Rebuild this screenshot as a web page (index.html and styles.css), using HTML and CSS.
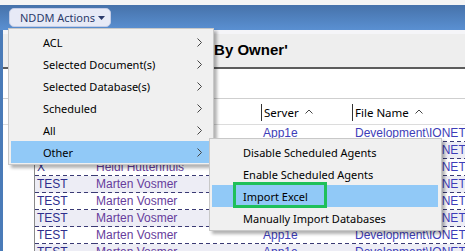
FILE: index.html
```html
<!DOCTYPE html>
<html lang="en">
<head>
    <meta charset="UTF-8">
    <title>NDDM - Databases</title>
    <link rel="stylesheet" href="styles.css">
</head>
<body>
    <div class="banner">
        <div class="actions">
            <button class="actions-button">NDDM Actions
                <svg class="caret" width="7" height="4" viewBox="0 0 7 4"><polygon points="0,0 7,0 3.5,4" fill="#2b3a6b"/></svg>
            </button>
            <div class="menu">
                <div class="menu-item">ACL<svg class="chevron" width="5" height="9" viewBox="0 0 5 9"><polyline points="0.5,0.5 4.5,4.5 0.5,8.5" fill="none" stroke="#444" stroke-width="1"/></svg></div>
                <div class="menu-item">Selected Document(s)<svg class="chevron" width="5" height="9" viewBox="0 0 5 9"><polyline points="0.5,0.5 4.5,4.5 0.5,8.5" fill="none" stroke="#444" stroke-width="1"/></svg></div>
                <div class="menu-item">Selected Database(s)<svg class="chevron" width="5" height="9" viewBox="0 0 5 9"><polyline points="0.5,0.5 4.5,4.5 0.5,8.5" fill="none" stroke="#444" stroke-width="1"/></svg></div>
                <div class="menu-item">Scheduled<svg class="chevron" width="5" height="9" viewBox="0 0 5 9"><polyline points="0.5,0.5 4.5,4.5 0.5,8.5" fill="none" stroke="#444" stroke-width="1"/></svg></div>
                <div class="menu-item">All<svg class="chevron" width="5" height="9" viewBox="0 0 5 9"><polyline points="0.5,0.5 4.5,4.5 0.5,8.5" fill="none" stroke="#444" stroke-width="1"/></svg></div>
                <div class="menu-item active">Other<svg class="chevron" width="5" height="9" viewBox="0 0 5 9"><polyline points="0.5,0.5 4.5,4.5 0.5,8.5" fill="none" stroke="#444" stroke-width="1"/></svg>
                    <div class="submenu">
                        <div class="menu-item">Disable Scheduled Agents</div>
                        <div class="menu-item">Enable Scheduled Agents</div>
                        <div class="menu-item active">Import Excel<span class="callout"></span></div>
                        <div class="menu-item">Manually Import Databases</div>
                    </div>
                </div>
            </div>
        </div>
    </div>
    <div class="workspace">
        <div class="stripe"></div>
        <div class="pane">
            <div class="view-title">All Databases 'By Owner'</div>
            <div class="toolbar"></div>
            <div class="grid">
                <div class="grid-head">
                    <div class="gutter"></div>
                    <div class="head-cell">Owner</div>
                    <div class="head-cell">Name</div>
                    <div class="head-cell sep">Server<svg class="sort" width="8" height="5" viewBox="0 0 8 5"><polyline points="0.5,4.5 4,1 7.5,4.5" fill="none" stroke="#444" stroke-width="1"/></svg></div>
                    <div class="head-cell sep">File Name<svg class="sort" width="8" height="5" viewBox="0 0 8 5"><polyline points="0.5,4.5 4,1 7.5,4.5" fill="none" stroke="#444" stroke-width="1"/></svg></div>
                </div>
                <div class="row">
                    <div class="gutter"></div>
                    <div class="cell c-type">X</div>
                    <div class="cell c-owner">Heidi Huttenhuis</div>
                    <div class="cell c-server">App1e</div>
                    <div class="cell c-file">Development\IONET\hr.nsf</div>
                </div>
                <div class="row shaded">
                    <div class="gutter"></div>
                    <div class="cell c-type">X</div>
                    <div class="cell c-owner">Heidi Huttenhuis</div>
                    <div class="cell c-server">App1e</div>
                    <div class="cell c-file">Development\IONET\sales.nsf</div>
                </div>
                <div class="row">
                    <div class="gutter"></div>
                    <div class="cell c-type">X</div>
                    <div class="cell c-owner">Heidi Huttenhuis</div>
                    <div class="cell c-server">App1e</div>
                    <div class="cell c-file">Development\IONET\tasks.nsf</div>
                </div>
                <div class="row shaded">
                    <div class="gutter"></div>
                    <div class="cell c-type">TEST</div>
                    <div class="cell c-owner">Marten Vosmer</div>
                    <div class="cell c-server">App1e</div>
                    <div class="cell c-file">Development\IONET\test1.nsf</div>
                </div>
                <div class="row">
                    <div class="gutter"></div>
                    <div class="cell c-type">TEST</div>
                    <div class="cell c-owner">Marten Vosmer</div>
                    <div class="cell c-server">App1e</div>
                    <div class="cell c-file">Development\IONET\test2.nsf</div>
                </div>
                <div class="row shaded">
                    <div class="gutter"></div>
                    <div class="cell c-type">TEST</div>
                    <div class="cell c-owner">Marten Vosmer</div>
                    <div class="cell c-server">App1e</div>
                    <div class="cell c-file">Development\IONET\test3.nsf</div>
                </div>
                <div class="row">
                    <div class="gutter"></div>
                    <div class="cell c-type">TEST</div>
                    <div class="cell c-owner">Marten Vosmer</div>
                    <div class="cell c-server">App1e</div>
                    <div class="cell c-file">Development\IONET\test4.nsf</div>
                </div>
                <div class="row shaded">
                    <div class="gutter"></div>
                    <div class="cell c-type">TEST</div>
                    <div class="cell c-owner">Marten Vosmer</div>
                    <div class="cell c-server">App1e</div>
                    <div class="cell c-file">Development\IONET\test5.nsf</div>
                </div>
            </div>
        </div>
    </div>
</body>
</html>
```

FILE: styles.css
```css
body {
    margin: 0;
    padding: 5px 0 0 0;
    background-color: #f4f4f4;
    font-family: 'Noto Sans', sans-serif;
    font-size: 11px;
    overflow: hidden;
}
.banner {
    height: 25px;
    background: linear-gradient(#4672aa, #5a90d2);
    padding: 3px 0 0 9px;
    box-sizing: border-box;
}
.actions {
    position: relative;
    width: 102px;
}
.actions-button {
    display: flex;
    align-items: center;
    gap: 3px;
    height: 19px;
    width: 102px;
    padding: 0 0 1px 10px;
    background-color: #e7eaf6;
    border: 1px solid #c3cce6;
    border-radius: 5px;
    color: #2b3a6b;
    font-family: 'Noto Sans', sans-serif;
    font-size: 11px;
    box-sizing: border-box;
}
.caret {
    margin-top: 1px;
}
.menu {
    position: absolute;
    top: 20px;
    left: -1px;
    width: 206px;
    padding: 2px 2px 1px 2px;
    background-color: #f0f0f0;
    border: 1px solid #c8c8c8;
    box-shadow: 3px 3px 3px rgba(0, 0, 0, 0.3);
    box-sizing: border-box;
    z-index: 2;
}
.menu-item {
    position: relative;
    display: flex;
    align-items: center;
    justify-content: space-between;
    height: 22px;
    padding: 0 9px 0 32px;
    color: #000;
}
.menu-item.active {
    background-color: #91c9f7;
}
.chevron {
    margin-top: 1px;
}
.submenu {
    position: absolute;
    top: -3px;
    left: 198px;
    width: 233px;
    padding: 2px 3px 1px 2px;
    background-color: #f0f0f0;
    border: 1px solid #c8c8c8;
    box-shadow: 3px 3px 3px rgba(0, 0, 0, 0.3);
    box-sizing: border-box;
}
.submenu .menu-item {
    padding-left: 31px;
}
.callout {
    position: absolute;
    left: 21px;
    top: -3px;
    width: 94px;
    height: 26px;
    border: 3px solid #1fc05a;
    box-sizing: border-box;
}
.workspace {
    display: flex;
    height: 230px;
}
.stripe {
    width: 3px;
    background-color: #4a7bb8;
}
.pane {
    flex: 1;
    background-color: #fff;
    min-width: 0;
}
.view-title {
    height: 39px;
    border-top: 4px solid #f5f5f8;
    border-bottom: 2px solid #5c5c5c;
    background-color: #eeeeee;
    padding-left: 105px;
    line-height: 31px;
    font-family: 'Liberation Sans', Arial, sans-serif;
    font-weight: bold;
    font-size: 15px;
    box-sizing: border-box;
}
.toolbar {
    height: 30px;
    border-bottom: 1px solid #cfcfcf;
    box-sizing: border-box;
}
.grid-head, .row {
    display: grid;
    grid-template-columns: 31px 60px 167px 91px 1fr;
}
.grid-head {
    height: 26px;
    border-bottom: 1px solid #dcdcdc;
    box-sizing: border-box;
}
.head-cell {
    position: relative;
    display: flex;
    align-items: center;
    gap: 6px;
    padding: 1px 0 0 3px;
    color: #000;
    font-size: 11.5px;
    white-space: nowrap;
}
.head-cell.sep::before {
    content: '';
    position: absolute;
    left: 0;
    top: 5px;
    bottom: 3px;
    width: 1px;
    background-color: #333;
}
.sort {
    margin-top: -2px;
}
.row {
    height: 17px;
}
.cell {
    padding: 0 0 0 2px;
    line-height: 16px;
    font-family: 'Liberation Sans', Arial, sans-serif;
    font-size: 12px;
    white-space: nowrap;
    overflow: hidden;
    background-image: repeating-linear-gradient(90deg, #3a3a74 0 4px, transparent 4px 7px);
    background-size: 100% 1px;
    background-position: left bottom;
    background-repeat: no-repeat;
}
.row.shaded .cell {
    background-color: #ededf5;
}
.c-type {
    border-left: 1px solid #8a8a8a;
    color: #2e2e8c;
}
.c-owner {
    color: #663c9c;
}
.c-server {
    color: #3d3db8;
}
.c-file {
    padding-left: 3px;
    color: #3d3db8;
}
```
